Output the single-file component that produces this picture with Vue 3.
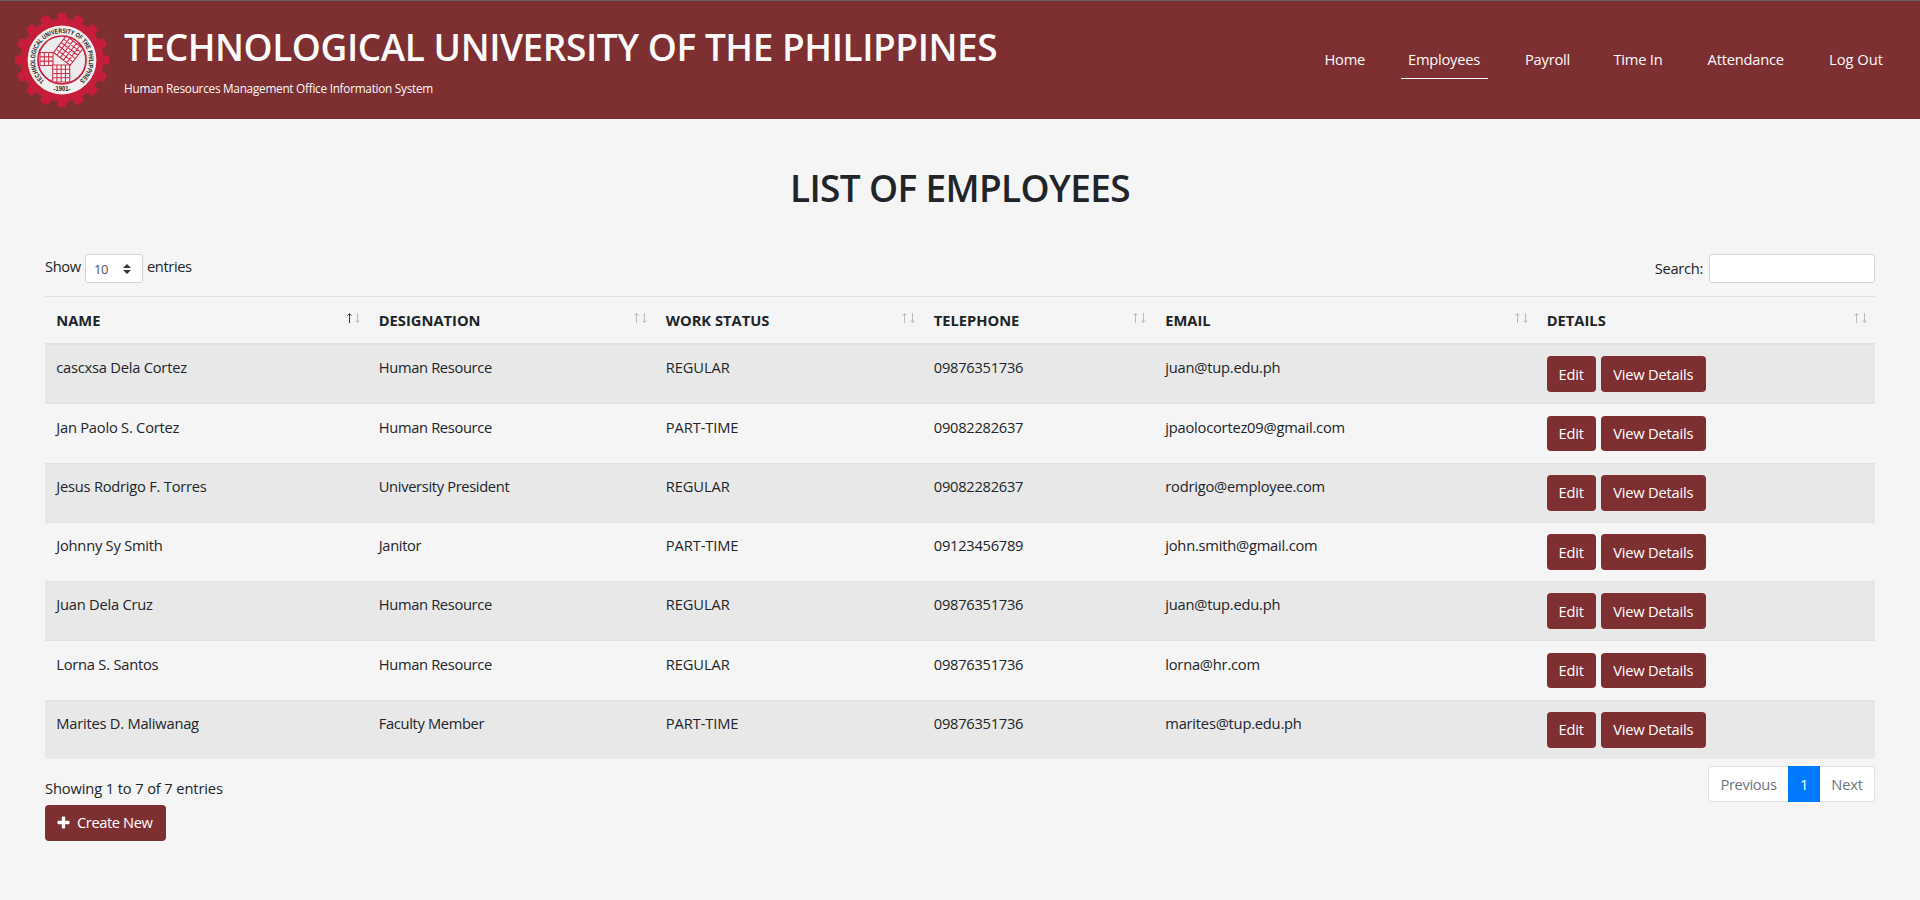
<script setup>
const nav = [
  { label: 'Home', cls: 'n-home' },
  { label: 'Employees', cls: 'n-emp', active: true },
  { label: 'Payroll', cls: 'n-pay' },
  { label: 'Time In', cls: 'n-time' },
  { label: 'Attendance', cls: 'n-att' },
  { label: 'Log Out', cls: 'n-out' },
]

const columns = ['Name', 'Designation', 'Work Status', 'Telephone', 'Email', 'Details']

const employees = [
  ['cascxsa Dela Cortez', 'Human Resource', 'REGULAR', '09876351736', 'juan@tup.edu.ph'],
  ['Jan Paolo S. Cortez', 'Human Resource', 'PART-TIME', '09082282637', 'jpaolocortez09@gmail.com'],
  ['Jesus Rodrigo F. Torres', 'University President', 'REGULAR', '09082282637', 'rodrigo@employee.com'],
  ['Johnny Sy Smith', 'Janitor', 'PART-TIME', '09123456789', 'john.smith@gmail.com'],
  ['Juan Dela Cruz', 'Human Resource', 'REGULAR', '09876351736', 'juan@tup.edu.ph'],
  ['Lorna S. Santos', 'Human Resource', 'REGULAR', '09876351736', 'lorna@hr.com'],
  ['Marites D. Maliwanag', 'Faculty Member', 'PART-TIME', '09876351736', 'marites@tup.edu.ph'],
]

const teeth = Array.from({ length: 16 }, (_, i) => i * 22.5)

// Grid lines for an n-by-n square with the given side length.
function grid(n, side) {
  let d = ''
  for (let i = 0; i <= n; i++) {
    const p = ((i * side) / n).toFixed(2)
    d += `M${p} 0V${side}M0 ${p}H${side}`
  }
  return d
}
const grid3 = grid(3, 13)
const grid4 = grid(4, 17)
const grid5 = grid(5, 21)
</script>

<template>
  <div class="page">
    <header class="topbar">
      <svg class="seal" viewBox="0 0 94 94" width="94" height="94">
        <g fill="#c61e3a">
          <circle cx="47" cy="47" r="41.5" />
          <path v-for="a in teeth" :key="a" d="M41.3 8L43.2 0H50.8L52.7 8Z" :transform="`rotate(${a} 47 47)`" />
        </g>
        <circle cx="47" cy="47" r="34.4" fill="#f0eeee" />
        <circle cx="47" cy="47" r="24" fill="#ececec" stroke="#c61e3a" stroke-width="1.7" />
        <defs>
          <path id="seal-arc" d="M29.6 67.7A27 27 0 1 1 64.4 67.7" />
        </defs>
        <text class="seal-name" textLength="131" lengthAdjust="spacingAndGlyphs">
          <textPath href="#seal-arc" textLength="131" lengthAdjust="spacingAndGlyphs">TECHNOLOGICAL UNIVERSITY OF THE PHILIPPINES</textPath>
        </text>
        <text class="seal-year" x="38.5" y="78.3" textLength="17" lengthAdjust="spacingAndGlyphs">-1901-</text>
        <g fill="#fbf3f4" stroke="#cb2f49" stroke-width="1.1">
          <path :d="grid3 + 'M0 0H13V13H0Z'" transform="translate(25 39.5)" />
          <path :d="grid4 + 'M0 0H17V17H0Z'" transform="translate(37.7 52)" />
          <path :d="grid5 + 'M0 0H21V21H0Z'" transform="translate(51.3 22.8) rotate(37.5)" />
        </g>
      </svg>
      <div class="brand">
        <h1>TECHNOLOGICAL UNIVERSITY OF THE PHILIPPINES</h1>
        <p>Human Resources Management Office Information System</p>
      </div>
      <nav>
        <a v-for="n in nav" :key="n.label" :class="[n.cls, { active: n.active }]">{{ n.label }}</a>
      </nav>
    </header>

    <main>
      <h2>LIST OF EMPLOYEES</h2>

      <div class="tools">
        <label class="show">
          <span class="t-show">Show</span>
          <span class="select">
            <span>10</span>
            <svg viewBox="0 0 4 5" width="8" height="10"><path fill="#343a40" d="M2 0L0 2h4zm0 5L0 3h4z" /></svg>
          </span>
          <span class="t-entries">entries</span>
        </label>
        <label class="search">
          <span>Search:</span>
          <input type="text" />
        </label>
      </div>

      <table>
        <colgroup>
          <col class="c1" /><col class="c2" /><col class="c3" /><col class="c4" /><col class="c5" /><col class="c6" />
        </colgroup>
        <thead>
          <tr>
            <th v-for="(c, i) in columns" :key="c">
              <div class="head">
                <span>{{ c.toUpperCase() }}</span>
                <svg class="sort" viewBox="0 0 13 10" width="13" height="10" fill="none" stroke="#212529">
                  <path :opacity="i === 0 ? 0.9 : 0.28" d="M2.5 10V1M0.5 2.5L2.5 0.7L4.5 2.5" />
                  <path opacity="0.28" d="M10.5 0V9M8.5 7.5L10.5 9.3L12.5 7.5" />
                </svg>
              </div>
            </th>
          </tr>
        </thead>
        <tbody>
          <tr v-for="(e, i) in employees" :key="i">
            <td v-for="(v, j) in e" :key="j" :class="'k' + j">{{ v }}</td>
            <td>
              <div class="actions">
                <button class="btn edit">Edit</button>
                <button class="btn view">View Details</button>
              </div>
            </td>
          </tr>
        </tbody>
      </table>

      <div class="foot">
        <div>
          <div class="info">Showing 1 to 7 of 7 entries</div>
          <button class="btn create">
            <svg viewBox="0 0 13 13" width="13" height="13"><path fill="#fff" d="M5.7 .5h1.6q.9 0 .9.9v3.4h3.4q.9 0 .9.9v1.6q0 .9-.9.9H8.2v3.4q0 .9-.9.9H5.7q-.9 0-.9-.9V8.2H1.4q-.9 0-.9-.9V5.7q0-.9.9-.9h3.4V1.4q0-.9.9-.9z" /></svg>
            <span>Create New</span>
          </button>
        </div>
        <div class="pager">
          <span class="prev">Previous</span><span class="cur">1</span><span class="next">Next</span>
        </div>
      </div>
    </main>
  </div>
</template>

<style>
body {
  background: #f5f5f5;
}
</style>

<style scoped>
.page {
  min-height: 900px;
  background: #f5f5f5;
  color: #212529;
  font: 400 14.7px/22.5px 'Open Sans', 'Noto Sans', sans-serif;
  letter-spacing: -0.22px;
}
.page * {
  box-sizing: border-box;
}
h1, h2, p {
  margin: 0;
}
.topbar {
  height: 119px;
  border-top: 1px solid #5f6368;
  background: #7d2f31;
  color: #fafafa;
  display: flex;
  align-items: flex-start;
  padding-left: 15px;
}
.seal {
  display: block;
  margin-top: 12px;
}
.seal-name {
  font: 700 6.8px 'Liberation Sans', sans-serif;
  fill: #1c1c1c;
  letter-spacing: 0;
}
.seal-year {
  font: 700 6.8px 'Liberation Sans', sans-serif;
  fill: #1c1c1c;
  letter-spacing: 0;
}
.brand {
  margin: 23px 0 0 15px;
}
.brand h1 {
  font-size: 37px;
  font-weight: 600;
  line-height: 45px;
  letter-spacing: -0.45px;
  white-space: nowrap;
}
.brand p {
  margin-top: 10px;
  font-size: 11.8px;
  line-height: 18px;
  letter-spacing: -0.27px;
}
nav {
  display: flex;
  gap: 30px;
  margin: 43px 29.5px 0 auto;
}
nav a {
  padding: 4px 7.5px 7px;
  border-bottom: 1px solid transparent;
  text-align: center;
  white-space: nowrap;
}
nav a.active {
  border-color: #fff;
}
.n-home { width: 56px; padding-left: 9.5px; padding-right: 5px; }
.n-emp { width: 87px; letter-spacing: -0.25px; }
.n-pay { width: 58.5px; }
.n-time { width: 64px; }
.n-att { width: 91.5px; }
.n-out { width: 69px; letter-spacing: 0; }

main {
  padding: 46px 45px 0;
}
h2 {
  font-size: 37px;
  font-weight: 600;
  line-height: 45px;
  letter-spacing: -0.64px;
  text-align: center;
}
.tools {
  display: flex;
  justify-content: space-between;
  margin-top: 44px;
  height: 42px;
}
.show, .search {
  display: flex;
  align-items: flex-start;
}
.t-show, .t-entries {
  padding-top: 1px;
  letter-spacing: -0.4px;
}
.t-show {
  width: 40px;
}
.select {
  width: 58px;
  height: 29px;
  margin-right: 4px;
  padding: 2px 11px 0 8px;
  border: 1px solid #ced4da;
  border-radius: 3px;
  background: #fff;
  color: #495057;
  font-size: 13px;
  letter-spacing: -0.4px;
  display: flex;
  align-items: center;
  justify-content: space-between;
}
.select svg {
  margin-top: -2px;
}
.search span {
  padding-top: 3px;
  margin-right: 6px;
  letter-spacing: -0.3px;
}
.search input {
  width: 166px;
  height: 29px;
  border: 1px solid #ced4da;
  border-radius: 3px;
  background: #fff;
}
table {
  width: 1830px;
  table-layout: fixed;
  border-collapse: separate;
  border-spacing: 0;
}
.c1 { width: 322.5px; }
.c2 { width: 287px; }
.c3 { width: 268px; }
.c4 { width: 231.5px; }
.c5 { width: 381.5px; }
.c6 { width: 339.5px; }
th, td {
  padding: 11.25px;
  border-top: 1px solid #dee2e6;
  text-align: left;
  vertical-align: top;
}
th {
  height: 49px;
  border-bottom: 2px solid #dee2e6;
  font-weight: 700;
  letter-spacing: 0;
}
td {
  height: 59.25px;
}
tbody tr:first-child td {
  border-top: 0;
  height: 58.25px;
}
tbody tr:nth-child(odd) {
  background: #e8e8e8;
}
.head {
  display: flex;
  justify-content: space-between;
  height: 22.5px;
  line-height: 24.5px;
}
.sort {
  margin: 4.75px -3.5px 0 0;
}
.k0 { letter-spacing: -0.23px; }
.k1 { letter-spacing: -0.34px; }
.k2 { letter-spacing: -0.1px; }
.k3 { letter-spacing: -0.27px; }
.actions {
  display: flex;
  gap: 5px;
}
.btn {
  height: 35.75px;
  padding: 0;
  border: 0;
  border-radius: 4px;
  background: #7d2f31;
  color: #fff;
  font: inherit;
  letter-spacing: -0.2px;
}
.edit { width: 49px; }
.view { width: 105px; }
.foot {
  display: flex;
  justify-content: space-between;
  align-items: flex-start;
  padding-top: 6.75px;
}
.info {
  padding-top: 11px;
  height: 39px;
  letter-spacing: -0.13px;
}
.create {
  width: 121px;
  height: 36px;
  padding-left: 11.5px;
  display: flex;
  align-items: center;
  gap: 7.5px;
  letter-spacing: -0.42px;
}
.create svg {
  margin-top: -1px;
}
.pager {
  display: flex;
  text-align: center;
  color: #6c757d;
}
.pager span {
  height: 36px;
  line-height: 34px;
  border: 1px solid #dee2e6;
  background: #fff;
}
.pager .prev {
  width: 80px;
  border-right: 0;
  border-radius: 4px 0 0 4px;
  letter-spacing: -0.36px;
}
.pager .cur {
  width: 32px;
  border-color: #007bff;
  background: #007bff;
  color: #fff;
}
.pager .next {
  width: 55px;
  border-left: 0;
  border-radius: 0 4px 4px 0;
}
</style>
